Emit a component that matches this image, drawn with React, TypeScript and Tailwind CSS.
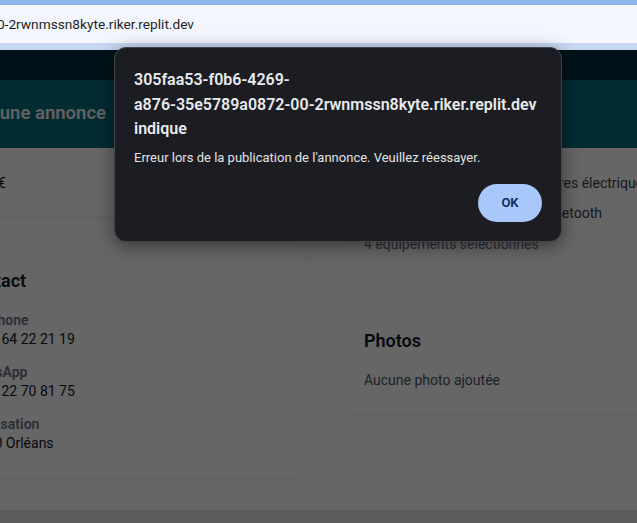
import React from 'react';
import { Check } from 'lucide-react';

interface Field {
  label: string;
  value: string;
}

const contact: Field[] = [
  { label: 'Téléphone', value: '+33 6 64 22 21 19' },
  { label: 'WhatsApp', value: '+33 6 22 70 81 75' },
  { label: 'Localisation', value: '45000 Orléans' },
];

const equipements = ['Climatisation', 'Vitres électriques', 'GPS', 'Bluetooth'];

const Page = () => (
  <div className="flex h-[473px] flex-col bg-[#fcfcfc]">
    {/* top nav */}
    <div className="h-[30px] shrink-0 bg-[#033040]" />
    {/* title bar */}
    <div className="flex h-[68px] shrink-0 items-center bg-[#066c7d]">
      <div className="flex w-[106px] justify-end whitespace-nowrap">
        <h1 className="text-[18.5px] font-semibold text-[#f2f2f2]">Publier une annonce</h1>
      </div>
    </div>

    {/* content */}
    <div className="flex flex-1 items-start">
      {/* left column */}
      <div className="flex w-[305px] shrink-0 justify-end">
        <div className="flex w-[366px] shrink-0 flex-col gap-[27px]">
          <div className="rounded-b-xl bg-white px-6 pt-[25px] pb-[23px] shadow-[0_1px_3px_rgba(0,0,0,0.05)]">
            <p className="text-[14px] leading-5 text-gray-900">1500 €</p>
          </div>
          <div className="rounded-xl bg-white px-6 pt-6 pb-[23px] shadow-[0_1px_3px_rgba(0,0,0,0.05)]">
            <h2 className="mb-4 text-[18px] font-semibold leading-7 text-gray-900">Contact</h2>
            <div className="flex flex-col gap-[14px]">
              {contact.map((f) => (
                <div key={f.label}>
                  <p className="text-[14px] font-semibold leading-[18px] text-gray-500">{f.label}</p>
                  <p className="text-[14px] leading-5 text-gray-900">{f.value}</p>
                </div>
              ))}
            </div>
          </div>
        </div>
      </div>

      {/* right column */}
      <div className="ml-[37px] flex w-[363px] shrink-0 flex-col gap-[27px]">
        <div className="rounded-b-xl bg-white px-[22px] pt-5 pb-[19px] shadow-[0_1px_3px_rgba(0,0,0,0.05)]">
          <div className="grid grid-cols-[154px_1fr]">
            {equipements.map((e) => (
              <div key={e} className="flex h-[30px] items-center gap-2 whitespace-nowrap">
                <Check className="h-4 w-4 text-teal-600" />
                <span className="text-[14px] text-gray-700">{e}</span>
              </div>
            ))}
          </div>
          <p className="mt-[6px] text-[14px] leading-5 text-gray-500">4 équipements sélectionnés</p>
        </div>
        <div className="rounded-xl bg-white px-[22px] pt-[27px] pb-[22px] shadow-[0_1px_3px_rgba(0,0,0,0.05)]">
          <h2 className="mb-[15px] text-[18px] font-semibold leading-7 text-gray-900">Photos</h2>
          <p className="text-[14px] leading-5 text-gray-600">Aucune photo ajoutée</p>
        </div>
      </div>
    </div>

    <div className="h-[13px] shrink-0 bg-[#e4e4e4]" />
  </div>
);

const Alert = () => (
  <div className="absolute left-[114px] top-[47px] w-[448px] rounded-[12px] border border-[#44454b] bg-[#1c1d22] px-[19px] pt-[20px] pb-[19px] shadow-[0_4px_18px_rgba(0,0,0,0.45)]">
    <div className="whitespace-nowrap text-[16px] font-semibold leading-[24.5px] text-[#e8eaed]">
      <div>305faa53-f0b6-4269-</div>
      <div>a876-35e5789a0872-00-2rwnmssn8kyte.riker.replit.dev</div>
      <div>indique</div>
    </div>
    <p className="mt-[6px] text-[13px] leading-5 text-[#e3e3e3]">
      Erreur lors de la publication de l'annonce. Veuillez réessayer.
    </p>
    <div className="mt-4 flex justify-end">
      <button className="h-[38px] w-[64px] rounded-full bg-[#a8c7fa] text-[13px] font-semibold text-[#0b2a5b]">
        OK
      </button>
    </div>
  </div>
);

export default function App() {
  return (
    <div className="relative h-[523px] w-[637px] overflow-hidden bg-white font-['Roboto',sans-serif]">
      {/* browser chrome */}
      <div className="h-[5px] bg-[#8ab4ec]" />
      <div className="flex h-[38px] items-center bg-[#f3f6fc]">
        <div className="flex w-[194px] justify-end whitespace-nowrap text-[13.7px] text-[#1f1f1f]">
          <span>305faa53-f0b6-4269-a876-35e5789a0872-00-2rwnmssn8kyte.riker.replit.dev</span>
        </div>
      </div>
      <div className="h-[7px] bg-[#c7d8f3]" />

      <div className="relative">
        <Page />
        <div className="absolute inset-0 bg-black/60" />
      </div>

      <Alert />
    </div>
  );
}
